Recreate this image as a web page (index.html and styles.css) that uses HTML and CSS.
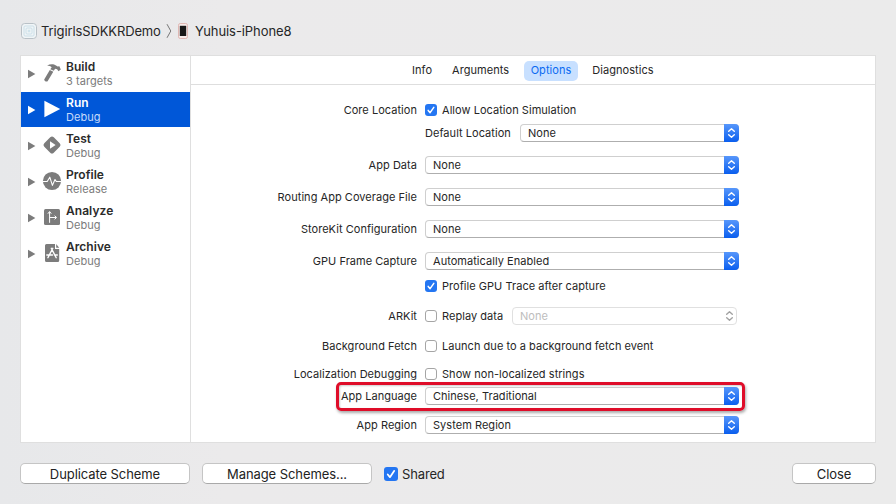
FILE: index.html
```html
<!DOCTYPE html>
<html lang="en">
<head>
<meta charset="utf-8">
<title>Edit Scheme</title>
<link rel="stylesheet" href="styles.css">
</head>
<body>
<svg class="defs" width="0" height="0">
  <symbol id="updown" viewBox="0 0 15 18"><path d="M4.700 7.200 7.500 4.700l2.800 2.500M4.700 10.800l2.800 2.500 2.800-2.500" fill="none" stroke="currentColor" stroke-width="1.400" stroke-linecap="round" stroke-linejoin="round"/></symbol>
  <symbol id="check" viewBox="0 0 12 12"><path d="M3.200 6.400 5.100 8.700 8.800 3.300" fill="none" stroke="#fff" stroke-width="1.500" stroke-linecap="round" stroke-linejoin="round"/></symbol>
  <symbol id="arrow" viewBox="0 0 8 10"><path d="M0 .8 7.400 5 0 9.200z" fill="currentColor"/></symbol>
</svg>
<div class="window">
  <header class="path">
    <svg class="app-icon" width="16" height="16" viewBox="0 0 16 16"><rect x=".5" y=".5" width="15" height="15" rx="3.200" fill="#f1f5f7" stroke="#b9c1c7"/><g fill="none" stroke="#c3d9e5" stroke-width=".8"><rect x="3" y="3" width="10" height="10" rx="1"/><rect x="5" y="5" width="6" height="6" rx="1"/></g><rect x="6.700" y="6.700" width="2.600" height="2.600" fill="#d0e3ec"/></svg>
    <span class="project">TrigirlsSDKKRDemo</span>
    <svg class="chevron" width="6" height="16" viewBox="0 0 6 16"><path d="M1 1.200 4.800 8 1 14.800" fill="none" stroke="#777" stroke-width="1"/></svg>
    <svg class="phone" width="10" height="16" viewBox="0 0 10 16"><rect x=".5" y=".5" width="9" height="15" rx="1.800" fill="#f8ecea" stroke="#dbaaa5" stroke-width=".8"/><rect x="1.800" y="2.800" width="6.400" height="10.200" fill="#181818"/></svg>
    <span class="device">Yuhuis-iPhone8</span>
  </header>

  <main class="panel">
    <nav class="sidebar">
      <div class="item">
        <svg class="arrow"><use href="#arrow"/></svg>
        <svg class="glyph" viewBox="0 0 20 20"><path d="M5.100 2.500C8 .8 11.700.7 14 2.500L15.600 3.600 17.400 3.200 18.800 6.400 16.500 8.300 15.100 6.200 13.100 5.800 11.800 7.700 8.300 6.200 9.700 4.200C8.600 2.900 6.900 2.700 5.100 2.500zM7.800 7.100 11.300 8.800 5.600 18.300C4.600 19.200 2.100 18 2.200 16.500z" fill="#7c7c7c"/></svg>
        <div class="names"><b>Build</b><span>3 targets</span></div>
      </div>
      <div class="item selected">
        <svg class="arrow"><use href="#arrow"/></svg>
        <svg class="glyph" viewBox="0 0 20 20"><path d="M2.400 1.700 18.200 10 2.400 18.300z" fill="#fff"/></svg>
        <div class="names"><b>Run</b><span>Debug</span></div>
      </div>
      <div class="item">
        <svg class="arrow"><use href="#arrow"/></svg>
        <svg class="glyph" viewBox="0 0 20 20"><rect x="3.300" y="3.300" width="13.400" height="13.400" rx="2.500" transform="rotate(45 10 10)" fill="#7c7c7c"/><path d="M8 6.200 13.600 10 8 13.800z" fill="#fff"/></svg>
        <div class="names"><b>Test</b><span>Debug</span></div>
      </div>
      <div class="item">
        <svg class="arrow"><use href="#arrow"/></svg>
        <svg class="glyph" viewBox="0 0 20 20"><circle cx="10" cy="10" r="9.100" fill="#7c7c7c"/><path d="M1 10.500H5.200L7.800 6.200 10.400 14.400 13 8.500 14.300 10.500H19" fill="none" stroke="#fff" stroke-width="1.100" stroke-linejoin="round"/></svg>
        <div class="names"><b>Profile</b><span>Release</span></div>
      </div>
      <div class="item">
        <svg class="arrow"><use href="#arrow"/></svg>
        <svg class="glyph" viewBox="0 0 20 20"><rect x="2" y="2" width="16" height="16" rx="1.500" fill="#7c7c7c"/><path d="M7.600 15.800V5M5.900 6.700 7.600 4.500 9.300 6.700M7.600 10.500H14M12.600 8.700 14.600 10.500 12.600 12.300" fill="none" stroke="#fff" stroke-width="1"/></svg>
        <div class="names"><b>Analyze</b><span>Debug</span></div>
      </div>
      <div class="item">
        <svg class="arrow"><use href="#arrow"/></svg>
        <svg class="glyph" viewBox="0 0 20 20"><path d="M4.500 1H13V6H17.200V17.500Q17.200 19 15.700 19H4.500Q3 19 3 17.500V2.500Q3 1 4.500 1zM14.200 1 17.200 4.700H14.200z" fill="#7c7c7c"/><path d="M9.300 5.300 14.200 14.700M10.800 5.300 5.900 14.700M4.800 12H10.500M12.500 12H15.300" fill="none" stroke="#fff" stroke-width="1.400" stroke-linecap="round"/></svg>
        <div class="names"><b>Archive</b><span>Debug</span></div>
      </div>
    </nav>

    <section class="content">
      <div class="tabs">
        <span class="tab info">Info</span><span class="tab arguments">Arguments</span><span class="tab active">Options</span><span class="tab diagnostics">Diagnostics</span>
      </div>
      <div class="form">
        <div class="row"><label>Core Location</label><i class="box on"><svg><use href="#check"/></svg></i><span class="text allow">Allow Location Simulation</span></div>
        <div class="row g3"><label></label><span class="default">Default Location</span><div class="select location"><span>None</span><svg><use href="#updown"/></svg></div></div>
        <div class="row g12"><label>App Data</label><div class="select"><span>None</span><svg><use href="#updown"/></svg></div></div>
        <div class="row g12"><label>Routing App Coverage File</label><div class="select"><span>None</span><svg><use href="#updown"/></svg></div></div>
        <div class="row g12"><label>StoreKit Configuration</label><div class="select"><span>None</span><svg><use href="#updown"/></svg></div></div>
        <div class="row g12"><label>GPU Frame Capture</label><div class="select"><span>Automatically Enabled</span><svg><use href="#updown"/></svg></div></div>
        <div class="row g5"><label></label><i class="box on"><svg><use href="#check"/></svg></i><span class="text">Profile GPU Trace after capture</span></div>
        <div class="row g10"><label>ARKit</label><i class="box"></i><span class="text">Replay data</span><div class="select disabled"><span>None</span><svg><use href="#updown"/></svg></div></div>
        <div class="row g10"><label>Background Fetch</label><i class="box"></i><span class="text">Launch due to a background fetch event</span></div>
        <div class="row g8"><label>Localization Debugging</label><i class="box"></i><span class="text">Show non-localized strings</span></div>
        <div class="row g2 marked"><label>App Language</label><div class="select"><span>Chinese, Traditional</span><svg><use href="#updown"/></svg></div></div>
        <div class="row g9"><label>App Region</label><div class="select"><span>System Region</span><svg><use href="#updown"/></svg></div></div>
      </div>
    </section>
  </main>

  <footer class="actions">
    <button class="duplicate">Duplicate Scheme</button>
    <button class="manage">Manage Schemes...</button>
    <i class="box on large"><svg viewBox="0 0 12 12"><use href="#check" width="12" height="12"/></svg></i><span class="shared">Shared</span>
    <button class="close">Close</button>
  </footer>
</div>
</body>
</html>
```
FILE: styles.css
```css
*, *::after { box-sizing: border-box; }
body { margin: 0; font-family: Inter, "Liberation Sans", sans-serif; color: #262626; }
.defs { position: absolute; }
.window { width: 896px; height: 504px; padding: 0 20px; background: linear-gradient(90deg, #e7e8ea 0, #ebeaeb 25%, #ebebeb 100%); overflow: hidden; }
.path { display: flex; align-items: center; height: 55px; padding: 7px 0 0 1px; font-size: 13px; white-space: nowrap; }
.path svg { flex: none; }
.project { width: 120px; margin-left: 4px; letter-spacing: -.12px; }
.chevron { margin-left: 5px; }
.phone { margin-left: 6px; }
.device { margin-left: 7px; letter-spacing: -.08px; }

.panel { display: flex; width: 856px; height: 388px; background: #fff; border: 1px solid #dfdfdf; }
.sidebar { width: 170px; flex: none; border-right: 1px solid #dfdfdf; }
.item { display: flex; height: 35px; margin-bottom: 1px; align-items: flex-start; }
.item:first-child { height: 36px; margin-bottom: 0; }
.arrow { width: 8px; height: 10px; margin: 13px 0 0 7px; color: #7c7c7c; flex: none; }
.glyph { width: 20px; height: 20px; margin: 7px 0 0 6px; flex: none; }
.names { display: flex; flex-direction: column; margin: 3px 0 0 4px; font-size: 11px; line-height: 14px; color: #7b7b7b; letter-spacing: .05px; }
.names b { font-size: 12px; line-height: 15px; font-weight: 600; color: #2b2b2b; letter-spacing: .05px; }
.selected { background: #0057d8; }
.selected .arrow, .selected .names b { color: #fff; }
.selected .names { color: #c6dafa; }

.content { flex: 1; }
.tabs { display: flex; justify-content: center; align-items: center; height: 29px; border-bottom: 1px solid #dedede; font-size: 11px; letter-spacing: .06px; padding-top: 1px; }
.tab { height: 20px; line-height: 19px; border-radius: 5px; text-align: center; white-space: nowrap; }
.info { width: 20px; }
.arguments { width: 57px; margin-left: 20px; }
.active { width: 54px; margin-left: 15px; background: #c8e0ff; color: #0b6af2; }
.diagnostics { width: 62px; margin-left: 14px; }

.form { padding-top: 15px; font-size: 11px; letter-spacing: .04px; white-space: nowrap; }
.row { display: flex; align-items: center; height: 20px; position: relative; }
.g2 { margin-top: 2px; } .g3 { margin-top: 3px; } .g5 { margin-top: 5px; }
.g8 { margin-top: 8px; } .g9 { margin-top: 9px; } .g10 { margin-top: 10px; } .g12 { margin-top: 12px; }
.row label { width: 226px; margin-right: 8px; text-align: right; flex: none; }
.select { display: flex; align-items: center; width: 314px; height: 18px; padding-left: 7px; background: #fff; border: 1px solid #cfcfcf; border-bottom-color: #aeaeae; border-radius: 4px; }
.select svg { width: 15px; height: 18px; margin: 0 -1px 0 auto; border-radius: 0 4px 4px 0; background: linear-gradient(#5797fb, #0a5eee); color: #fff; flex: none; }
.default { width: 95px; }
.location { width: 219px; }
.disabled { width: 225px; margin-left: auto; margin-right: 138px; color: #bdbdbd; border-color: #e0e0e0; }
.disabled svg { background: none; color: #a2a2a2; }
.box { width: 12px; height: 12px; border: 1px solid #a5a5a5; border-radius: 3px; background: #fff; flex: none; }
.box svg { display: block; width: 100%; height: 100%; }
.box.on { border: 0; background: #2476f2; }
.text { margin-left: 5px; }
.marked::after { content: ""; position: absolute; left: 145px; top: -4px; width: 409px; height: 29px; border: 3px solid #df0d29; border-radius: 5px; box-shadow: 1px 2px 3px #0005, inset 1px 1px 2px #0003; }

.actions { display: flex; align-items: center; height: 21px; margin-top: 20px; }
button { height: 21px; padding: 0; font: 13px/18px Inter, "Liberation Sans", sans-serif; letter-spacing: -.08px; color: #222; background: #fff; border: 1px solid #c5c5c5; border-bottom-color: #a9a9a9; border-radius: 5px; }
.duplicate, .manage { width: 170px; }
.manage { margin-left: 12px; }
.large { width: 14px; height: 14px; margin: 1px 0 0 12px; }
.shared { margin: 1px 0 0 4px; font-size: 13px; letter-spacing: -.15px; }
.close { width: 84px; margin-left: auto; }
```
